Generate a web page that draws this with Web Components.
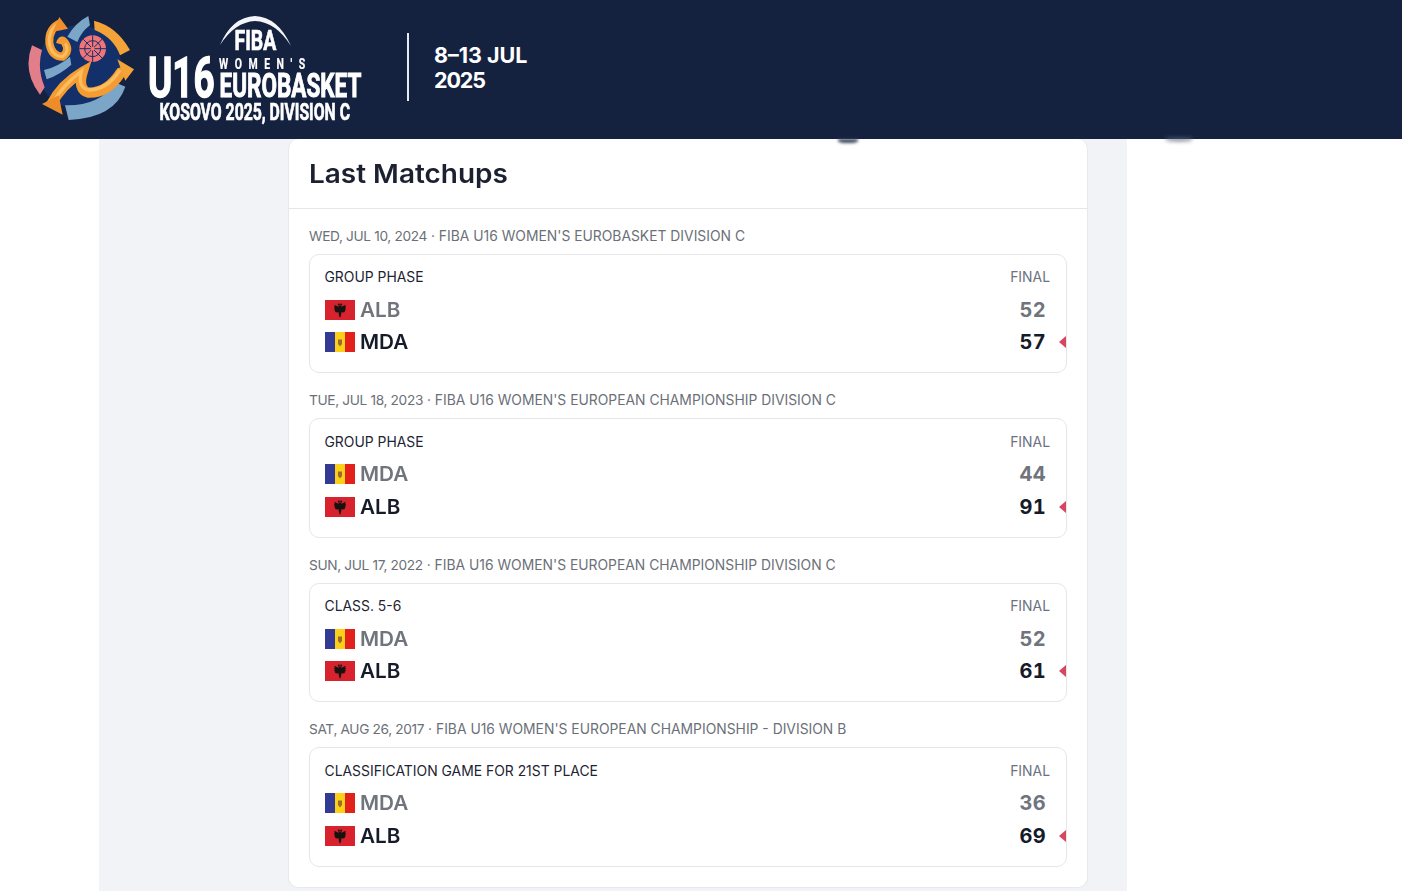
<!DOCTYPE html>
<html lang="en">
<head>
<meta charset="utf-8">
<title>Last Matchups</title>
<style>
  html,body{margin:0;padding:0;background:#fff}
  body{font-family:Inter,"Liberation Sans",sans-serif;height:891px;overflow:hidden}
</style>
</head>
<body>
<event-header></event-header>
<page-column>
  <matchup-panel heading="Last Matchups">
    <match-group day="WED, JUL 10, 2024" event="FIBA U16 WOMEN'S EUROBASKET DIVISION C" phase="GROUP PHASE">
      <team-row code="ALB" score="52">ALB</team-row>
      <team-row code="MDA" score="57" winner>MDA</team-row>
    </match-group>
    <match-group day="TUE, JUL 18, 2023" event="FIBA U16 WOMEN'S EUROPEAN CHAMPIONSHIP DIVISION C" phase="GROUP PHASE">
      <team-row code="MDA" score="44">MDA</team-row>
      <team-row code="ALB" score="91" winner>ALB</team-row>
    </match-group>
    <match-group day="SUN, JUL 17, 2022" event="FIBA U16 WOMEN'S EUROPEAN CHAMPIONSHIP DIVISION C" phase="CLASS. 5-6">
      <team-row code="MDA" score="52">MDA</team-row>
      <team-row code="ALB" score="61" winner>ALB</team-row>
    </match-group>
    <match-group day="SAT, AUG 26, 2017" event="FIBA U16 WOMEN'S EUROPEAN CHAMPIONSHIP - DIVISION B" phase="CLASSIFICATION GAME FOR 21ST PLACE">
      <team-row code="MDA" score="36">MDA</team-row>
      <team-row code="ALB" score="69" winner>ALB</team-row>
    </match-group>
  </matchup-panel>
</page-column>

<script>
class EventHeader extends HTMLElement {
    connectedCallback() {
        this.attachShadow({ mode: 'open' });
        this.shadowRoot.innerHTML = `
            <style>
                :host{display:flex;align-items:flex-start;height:139px;background:#142240;position:relative;z-index:5}
                svg{display:block;width:340px;height:116px;margin:12px 0 0 25px;flex:none;filter:blur(.35px)}
                .rule{width:2px;height:68px;background:#e8eaf0;margin:33px 0 0 42px;flex:none}
                .dates{margin:43px 0 0 25px;color:#fff;font:700 21.5px/25px Inter,"Liberation Sans",sans-serif}
                .dates span{letter-spacing:-1.1px}
                .smudge{position:absolute;top:139px;height:4px;background:#3c465c;border-radius:0 0 50% 50%;filter:blur(1.5px)}
                .faint{top:138px;height:3px;background:#5a6375;filter:blur(2px)}
            </style>
            <svg viewBox="25 12 340 116" aria-label="FIBA U16 Women's EuroBasket">
                <g transform="translate(20 8) scale(.3333)">
                    <circle cx="178" cy="178" r="126" fill="#14306a"/>
                    <path d="M36 112L66 126Q50 180 74 238L60 260Q6 190 36 112Z" fill="#e27d8a"/>
                    <path d="M142 86Q165 45 205 24L210 52Q185 70 172 102Z" fill="#7ca6c8"/>
                    <path d="M72 186Q115 176 150 146L154 170Q120 200 80 214Z" fill="#7ca6c8"/>
                    <path d="M135 292Q235 295 288 224L316 236Q285 330 146 336Z" fill="#7ca6c8"/>
                    <path d="M222 38Q290 55 330 126L300 142Q280 88 224 66Z" fill="#f4a338"/>
                    <path d="M124 44Q85 60 88 105Q95 146 128 146Q150 130 136 106Q125 88 120 108" fill="none" stroke="#f49c32" stroke-width="24"/>
                    <path d="M124 44Q85 60 88 105Q95 146 128 146Q150 130 136 106" fill="none" stroke="#fbbd5e" stroke-width="9"/>
                    <path d="M118 27L144 62L98 72Z" fill="#f08f2c"/>
                    <path d="M92 292Q125 228 188 192Q172 244 205 254Q262 256 302 194L318 190" fill="none" stroke="#f49c32" stroke-width="31"/>
                    <path d="M100 282Q130 230 184 190Q172 238 205 246Q262 246 300 186" fill="none" stroke="#fbbd5e" stroke-width="10"/>
                    <path d="M66 288L128 320L116 262Z" fill="#ee8c2a"/>
                    <path d="M292 154L342 184L316 218Z" fill="#f4a338"/>
                    <circle cx="218" cy="122" r="40" fill="#f07478"/>
                    <g stroke="#14306a" stroke-width="3" fill="none">
                        <path d="M218 82V162M178 122H258M190 94L246 150M246 94L190 150"/>
                        <circle cx="218" cy="122" r="24"/>
                    </g>
                    <circle cx="218" cy="122" r="6" fill="#f07478"/>
                </g>
                <path d="M220 45Q232 17 255 16Q278 17 291 46Q276 22 255 21Q235 22 220 45Z" fill="#f4f5f8"/>
                <g fill="#fff" stroke="#fff" stroke-width=".7" font-family="Roboto,'Liberation Sans',sans-serif" font-weight="700">
                    <text transform="translate(234.5 50) scale(.72 1)" font-size="27">FIBA</text>
                    <text transform="translate(148 97) scale(.67 1)" font-size="55" stroke-width="1.4">U16</text>
                    <text transform="translate(219 69) scale(.75 1)" font-size="14" letter-spacing="8.7" stroke-width=".2">WOMEN'S</text>
                    <text transform="translate(219.5 97) scale(.662 1)" font-size="34" stroke-width="1">EUROBASKET</text>
                    <text transform="translate(159.5 120) scale(.686 1)" font-size="23">KOSOVO 2025, DIVISION C</text>
                </g>
            </svg>
            <div class="rule"></div>
            <div class="dates">8–13 JUL<br><span>2025</span></div>
            <i class="smudge" style="left:838px;width:20px"></i>
            <i class="smudge faint" style="left:1166px;width:26px"></i>
        `;
    }
}

class PageColumn extends HTMLElement {
    connectedCallback() {
        this.attachShadow({ mode: 'open' });
        this.shadowRoot.innerHTML = `
            <style>
                :host{display:block;width:1028px;height:752px;margin-left:99px;padding-left:189px;box-sizing:border-box;background:#f1f3f7}
            </style>
            <slot></slot>
        `;
    }
}

class MatchupPanel extends HTMLElement {
    connectedCallback() {
        this.attachShadow({ mode: 'open' });
        this.shadowRoot.innerHTML = `
            <style>
                :host{display:block;width:800px;box-sizing:border-box;background:#fff;border:1px solid #e7e8ec;border-top:0;border-radius:10px}
                h2{margin:0;height:70px;box-sizing:border-box;padding-left:20px;border-bottom:1px solid #e5e6ea;font:600 26px/69px Inter,"Liberation Sans",sans-serif;color:#1b2130}
                h2 span{display:inline-block;transform:scaleX(1.075);transform-origin:left center}
                .list{display:flex;flex-direction:column;gap:18px;padding:17.5px 20px 20px}
            </style>
            <h2><span>${this.getAttribute('heading')}</span></h2>
            <div class="list"><slot></slot></div>
        `;
    }
}

class MatchGroup extends HTMLElement {
    connectedCallback() {
        this.attachShadow({ mode: 'open' });
        this.shadowRoot.innerHTML = `
            <style>
                :host{display:block}
                .date{height:18px;margin-bottom:9px;font:400 13.87px/18px Inter,"Liberation Sans",sans-serif;color:#6b7078;white-space:nowrap}
                .day{font-size:13.7px;letter-spacing:-.35px}
                .box{height:119.5px;box-sizing:border-box;padding:14.5px 16px 0 14.5px;border:1px solid #e5e6ea;border-radius:10px}
                .top{display:flex;justify-content:space-between;height:16px;margin-bottom:8.5px;font:400 13.9px/16px Inter,"Liberation Sans",sans-serif;color:#1c2433}
                .final{color:#6b7280}
            </style>
            <div class="date"><span class="day">${this.getAttribute('day')}</span> · ${this.getAttribute('event')}</div>
            <div class="box">
                <div class="top"><span>${this.getAttribute('phase')}</span><span class="final">FINAL</span></div>
                <slot></slot>
            </div>
        `;
    }
}

class TeamRow extends HTMLElement {
    connectedCallback() {
        this.attachShadow({ mode: 'open' });
        const won = this.hasAttribute('winner');
        this.shadowRoot.innerHTML = `
            <style>
                :host{display:flex;align-items:center;height:32.5px;position:relative;color:${won ? '#161b2a' : '#6f747d'};font:600 20px/24px Inter,"Liberation Sans",sans-serif}
                country-flag{margin-left:.5px}
                .name{margin-left:4.5px;flex:1}
                .name span{display:inline-block;transform:scaleX(1.035);transform-origin:left center}
                .score{padding-right:4px;font-variant-numeric:tabular-nums;font-weight:700;letter-spacing:.3px}
                .arrow{position:absolute;right:-16px;top:50%;margin-top:-6px;width:0;height:0;border:6px solid transparent;border-left:0;border-right:7px solid #d8455f}
            </style>
            <country-flag code="${this.getAttribute('code')}"></country-flag>
            <span class="name"><span><slot></slot></span></span>
            <span class="score">${this.getAttribute('score')}</span>
            ${won ? '<i class="arrow"></i>' : ''}
        `;
    }
}

class CountryFlag extends HTMLElement {
    connectedCallback() {
        this.attachShadow({ mode: 'open' });
        const art = this.getAttribute('code') === 'ALB'
            ? `<rect width="30" height="20" fill="#d8222e"/>
               <g fill="#17120f">
                 <circle cx="13.8" cy="4.6" r="1"/><circle cx="16.2" cy="4.6" r="1"/>
                 <path d="M13.6 5.5h2.8v7.5l-.5 3-.9 1.8-.9-1.8-.5-3z"/>
                 <path d="M14 7L9.4 4.8l.4 2-.9.5 1 1.6-.8.8 1.3 1.2-.4 1 2 .6 2-.5z"/>
                 <path d="M16 7l4.6-2.2-.4 2 .9.5-1 1.6.8.8-1.3 1.2.4 1-2 .6-2-.5z"/>
               </g>`
            : `<rect width="10" height="20" fill="#323a93"/>
               <rect x="10" width="10" height="20" fill="#fbd016"/>
               <rect x="20" width="10" height="20" fill="#e2211b"/>
               <path d="M13 7.5h4v4.5L15 14.5 13 12z" fill="#9a6b2c"/>`;
        this.shadowRoot.innerHTML = `
            <style>
                :host{display:block;width:30px;height:20px;flex:none}
                svg{display:block;width:30px;height:20px}
            </style>
            <svg viewBox="0 0 30 20">${art}</svg>
        `;
    }
}

customElements.define('event-header', EventHeader);
customElements.define('page-column', PageColumn);
customElements.define('matchup-panel', MatchupPanel);
customElements.define('match-group', MatchGroup);
customElements.define('team-row', TeamRow);
customElements.define('country-flag', CountryFlag);
</script>
</body>
</html>
